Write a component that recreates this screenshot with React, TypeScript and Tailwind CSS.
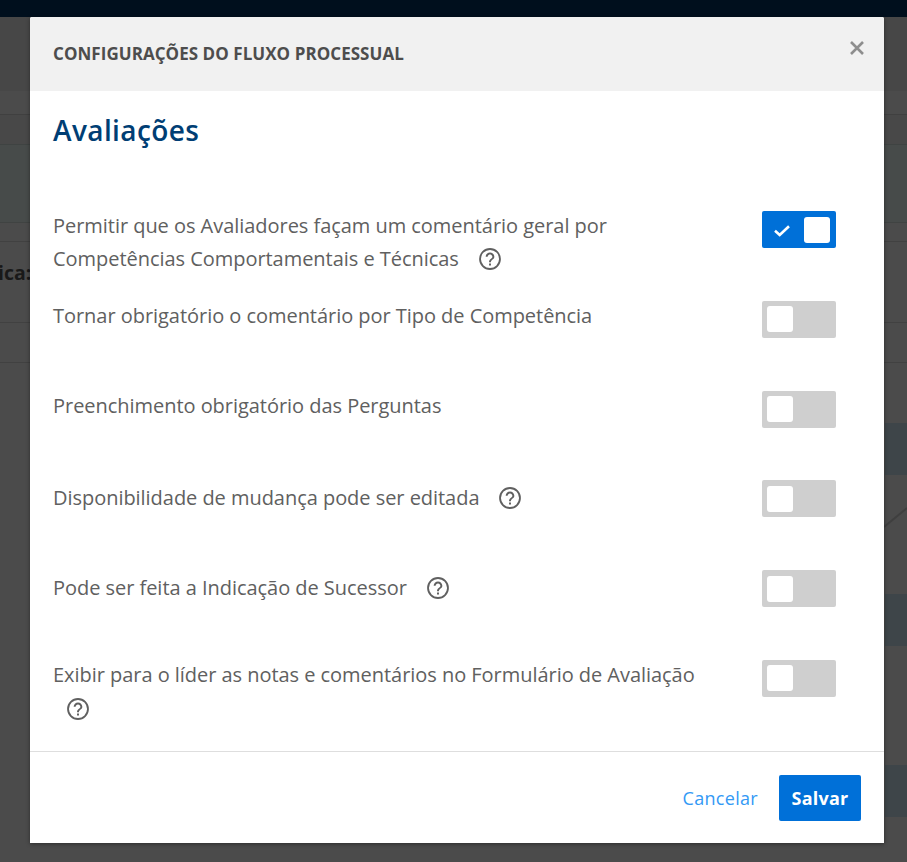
import { useState } from 'react';

type Setting = {
  id: string;
  lines: string[];
  help?: 'inline' | 'below';
  offset: string;
};

const SETTINGS: Setting[] = [
  {
    id: 'general-comment',
    lines: ['Permitir que os Avaliadores façam um comentário geral por', 'Competências Comportamentais e Técnicas'],
    help: 'inline',
    offset: 'pt-0',
  },
  { id: 'required-comment', lines: ['Tornar obrigatório o comentário por Tipo de Competência'], offset: 'pt-0' },
  { id: 'required-questions', lines: ['Preenchimento obrigatório das Perguntas'], offset: 'pt-0' },
  { id: 'availability', lines: ['Disponibilidade de mudança pode ser editada'], help: 'inline', offset: 'pt-[3px]' },
  { id: 'successor', lines: ['Pode ser feita a Indicação de Sucessor'], help: 'inline', offset: 'pt-[3px]' },
  {
    id: 'leader-view',
    lines: ['Exibir para o líder as notas e comentários no Formulário de Avaliação'],
    help: 'below',
    offset: 'pt-0',
  },
];

function HelpIcon({ className }: { className: string }) {
  return (
    <svg viewBox="0 0 24 24" fill="#606060" className={`block h-[26px] w-[26px] ${className}`}>
      <circle cx="12" cy="12" r="9.2" fill="none" stroke="#606060" strokeWidth="1.7" />
      <path d="M11.1 18h1.8v-1.9h-1.8V18zM12 6c-2.21 0-4 1.79-4 4h1.8c0-1.2 1-2.2 2.2-2.2s2.2 1 2.2 2.2c0 2-3.1 1.75-3.1 5h1.8c0-2.25 3.1-2.5 3.1-5 0-2.21-1.79-4-4-4z" />
    </svg>
  );
}

function Toggle({ checked, onChange }: { checked: boolean; onChange: () => void }) {
  return (
    <button
      role="switch"
      aria-checked={checked}
      onClick={onChange}
      className={`flex h-[37px] w-[74px] shrink-0 cursor-pointer items-center rounded-[2px] pl-[5px] pr-[6px] ${
        checked ? 'justify-between bg-[#0070d8]' : 'bg-[#cfcfcf]'
      }`}
    >
      {checked && (
        <svg viewBox="0 0 16 12" fill="none" stroke="white" strokeWidth="2.6" className="ml-[7px] mt-[3px] h-[12px] w-[16px]">
          <path d="M1 5.8 5.7 10 15 1.3" />
        </svg>
      )}
      <span className="h-[26px] w-[26px] rounded-[3px] bg-white" />
    </button>
  );
}

// Page behind the modal, already dimmed
function Backdrop() {
  return (
    <div className="flex h-full flex-col bg-[#4b4b4b]">
      <div className="h-[17px] bg-[#000f1d]" />
      <div className="h-[74px] bg-[#474747]" />
      <div className="h-[24px] border-b border-[#404040]" />
      <div className="h-[30px] border-b border-[#3f4342] bg-[#484848]" />
      <div className="h-[78px] border-b border-[#404342] bg-[#474b4a]" />
      <div className="h-[19px] border-b border-[#414141]" />
      <div className="flex h-[81px] items-center border-b border-[#414141]">
        <span className="-ml-[2px] -mt-[18px] text-[19.5px] font-bold text-[#191919]">ica:</span>
      </div>
      <div className="h-[40px] border-b border-[#414141]" />
      <div className="flex flex-1 flex-col items-end pt-[60px]">
        <div className="h-[52px] w-[22px] bg-[#3e4549]" />
        <svg viewBox="0 0 23 119" className="h-[119px] w-[23px]" fill="none" stroke="#3f3f3f" strokeWidth="2">
          <path d="M0 52 23 33" />
        </svg>
        <div className="h-[52px] w-[22px] bg-[#3e4549]" />
        <div className="mt-[119px] h-[52px] w-[22px] bg-[#3e4549]" />
      </div>
    </div>
  );
}

export default function App() {
  const [enabled, setEnabled] = useState<Record<string, boolean>>({ 'general-comment': true });

  const toggle = (id: string) => setEnabled(prev => ({ ...prev, [id]: !prev[id] }));

  return (
    <div className="relative h-[862px] w-[907px] overflow-hidden font-['Open_Sans',sans-serif]">
      <Backdrop />

      <div className="absolute left-[30px] top-[17px] flex h-[826px] w-[854px] flex-col rounded-t-[2px] bg-white shadow-[0_1px_4px_rgba(0,0,0,0.4)]">
        <header className="flex h-[74px] shrink-0 items-center justify-between rounded-t-[2px] bg-[#f1f1f1] pl-[23px] pr-[19px]">
          <h1 className="text-[17px] font-bold tracking-[0.05px] text-[#4d4d4d]">CONFIGURAÇÕES DO FLUXO PROCESSUAL</h1>
          <button className="-mt-[12px] cursor-pointer" aria-label="Fechar">
            <svg viewBox="0 0 16 16" className="h-[16px] w-[16px]" stroke="#8e8e8e" strokeWidth="2.6">
              <path d="M2 2 14 14M14 2 2 14" />
            </svg>
          </button>
        </header>

        <main className="flex-1 pl-[23px] pr-[48px] pt-[19px]">
          <h2 className="h-[99px] text-[28px] font-[550] leading-[41px] tracking-[0.4px] text-[#003e74]">Avaliações</h2>

          {SETTINGS.map(({ id, lines, help, offset }) => (
            <div key={id} className="flex h-[89.8px] items-start justify-between">
              <div className={`whitespace-nowrap text-[20px] leading-[33px] tracking-[-0.04px] text-[#606060] ${offset}`}>
                {lines.map((line, i) => (
                  <div key={line} className="flex items-center">
                    {line}
                    {help === 'inline' && i === lines.length - 1 && <HelpIcon className="ml-[18px]" />}
                  </div>
                ))}
                {help === 'below' && <HelpIcon className="ml-[12px] mt-[5px]" />}
              </div>
              <div className="pt-[2px]">
                <Toggle checked={!!enabled[id]} onChange={() => toggle(id)} />
              </div>
            </div>
          ))}
        </main>

        <footer className="flex h-[92px] shrink-0 items-center justify-end gap-[21px] border-t border-[#dedede] pr-[23px]">
          <button className="cursor-pointer pt-[1px] text-[18px] tracking-[0.3px] text-[#3399f5]">Cancelar</button>
          <button className="h-[46px] w-[82px] cursor-pointer rounded-[2px] bg-[#0070d8] pt-[1px] text-[18px] font-bold tracking-[0.2px] text-white">
            Salvar
          </button>
        </footer>
      </div>
    </div>
  );
}
